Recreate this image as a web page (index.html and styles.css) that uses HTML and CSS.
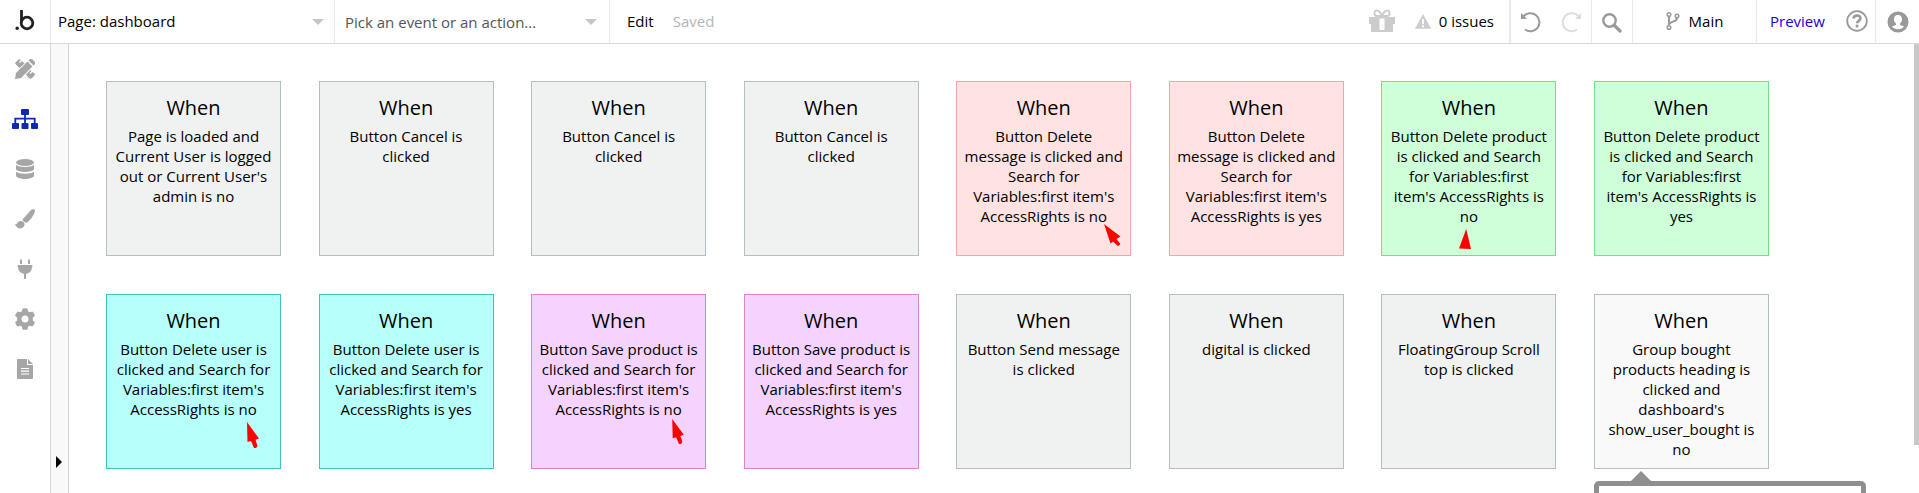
FILE: index.html
```html
<!DOCTYPE html>
<html lang="en">

<head>
    <meta charset="utf-8">
    <title>Workflow editor</title>
    <meta name="viewport" content="width=device-width, initial-scale=1.0">
    <link rel="stylesheet" href="styles.css">
</head>

<body>
    <header class="topbar">
        <a class="logo" href="#" aria-label="Home">
            <svg width="20" height="22" viewBox="0 0 20 22">
                <circle cx="2.2" cy="18.3" r="1.7" fill="#222" />
                <path d="M6.5 0v12" fill="none" stroke="#222" stroke-width="2.8" />
                <circle cx="12" cy="13" r="5.8" fill="none" stroke="#222" stroke-width="2.8" />
            </svg>
        </a>
        <div class="dropdown page-picker">
            <select aria-label="Page">
                <option>Page: dashboard</option>
            </select>
        </div>
        <div class="dropdown event-picker">
            <select aria-label="Event or action">
                <option>Pick an event or an action...</option>
            </select>
        </div>
        <button class="edit">Edit</button>
        <span class="saved">Saved</span>

        <div class="issues">
            <button aria-label="Gift">
                <svg width="26" height="24" viewBox="0 0 26 24">
                    <path d="M0 8h26v7h-2v8H2v-8H0z" fill="#ccc" />
                    <path d="M10.500 9.500h5V21h-5z" fill="#fff" />
                    <path d="M13 7C11 2 9 1 7 1.500S4.500 7 8 7h10c3.500 0 3-5 1-5.500S15 2 13 7" fill="none" stroke="#ccc" stroke-width="2" />
                </svg>
            </button>
            <button class="issue-count">
                <svg width="16" height="15" viewBox="0 0 16 15">
                    <path d="M8 .5 15.700 14.500H.3z" fill="#ccc" stroke="#ccc" stroke-width=".5" stroke-linejoin="round" />
                    <path d="M8 5v5M8 11.200v2" stroke="#fff" stroke-width="2" />
                </svg>
                0 issues
            </button>
        </div>
        <div class="history">
            <button aria-label="Undo">
                <svg width="22" height="22" viewBox="0 0 22 22">
                    <path d="M3.500 5.500A9 9 0 1 1 5 18.500" fill="none" stroke="#999" stroke-width="2" />
                    <path d="M1 2v6h6z" fill="#999" />
                </svg>
            </button>
            <button aria-label="Redo">
                <svg width="22" height="22" viewBox="0 0 22 22">
                    <path d="M18.500 5.500A9 9 0 1 0 17 18.500" fill="none" stroke="#ddd" stroke-width="2" />
                    <path d="M21 2v6h-6z" fill="#ddd" />
                </svg>
            </button>
        </div>
        <button class="search" aria-label="Search">
            <svg width="20" height="20" viewBox="0 0 20 20">
                <circle cx="7.500" cy="7.500" r="6.200" fill="none" stroke="#999" stroke-width="2.400" />
                <path d="M12 12l7 7" stroke="#999" stroke-width="3.200" />
            </svg>
        </button>
        <button class="branch">
            <svg width="14" height="20" viewBox="0 0 14 20" fill="none" stroke="#999">
                <circle cx="3" cy="3.500" r="1.800" stroke-width="1.500" />
                <circle cx="11" cy="5" r="1.800" stroke-width="1.500" />
                <circle cx="3" cy="16.500" r="1.800" stroke-width="1.500" />
                <path d="M3 5.500v9M11 7c0 4-6 3-8 6" stroke-width="2" />
            </svg>
            Main
        </button>
        <div class="preview">
            <a href="#">Preview</a>
            <button aria-label="Help">
                <svg width="22" height="22" viewBox="0 0 22 22" fill="none" stroke="#999">
                    <circle cx="11" cy="11" r="9.800" stroke-width="1.800" />
                    <path d="M7.500 8.500C8 4.500 14.500 4.500 14.500 8.300c0 2.700-3.500 2.500-3.500 5" stroke-width="2.600" />
                    <path d="M9.700 16h2.700" stroke-width="2.600" />
                </svg>
            </button>
        </div>
        <button class="account" aria-label="Account">
            <svg width="22" height="22" viewBox="0 0 22 22">
                <circle cx="11" cy="11" r="10.500" fill="#999" />
                <path d="M11 4c-3 0-4 2-4 4.300 0 2 .8 3.400 2 4.200v1.500l-4 1.600c1.300 1.700 3.500 2.700 6 2.700s4.700-1 6-2.700l-4-1.600v-1.500c1.200-.8 2-2.200 2-4.200C15 6 14 4 11 4z" fill="#fff" />
            </svg>
        </button>
    </header>

    <div class="workspace">
        <nav class="sidebar">
            <a href="#" aria-label="Design">
                <svg width="20" height="20" viewBox="0 0 20 20" fill="currentColor">
                    <path d="M0 20l1-6L12.500 2.500l5 5L6 19z" />
                    <path d="M13.500 1.500l1-1a2 2 0 0 1 3 0l2 2a2 2 0 0 1 0 3l-1 1z" />
                    <path d="M4.500 9 1 5.500Q-.5 4 1 3L3.500.5Q5 0 6 1L4 3l1 1 2-2L9.500 4.500zM11 15.500l4.500-4.500 1 1-2 2 1 1 2-2 2 1.500q1 1 0 2L17 19q-1.500 1.500-3 0z" />
                </svg>
            </a>
            <a class="active" href="#" aria-label="Workflow">
                <svg width="26" height="20" viewBox="0 0 26 20" fill="currentColor">
                    <rect x="9" y="0" width="8" height="6" rx="1" />
                    <rect x="0" y="14" width="7" height="6" rx="1" />
                    <rect x="9.500" y="14" width="7" height="6" rx="1" />
                    <rect x="19" y="14" width="7" height="6" rx="1" />
                    <path d="M13 5v9M3.300 14V9.700h19.400V14" fill="none" stroke="currentColor" stroke-width="1.800" />
                </svg>
            </a>
            <a href="#" aria-label="Data">
                <svg width="18" height="20" viewBox="0 0 18 20" fill="currentColor">
                    <ellipse cx="9" cy="3.500" rx="9" ry="3.500" />
                    <path d="M0 6c3 2.600 15 2.600 18 0v4.300c-2 3.600-16 3.600-18 0zM0 12.700c3 2.600 15 2.600 18 0V17c-2 4-16 4-18 0z" />
                </svg>
            </a>
            <a href="#" aria-label="Styles">
                <svg width="20" height="20" viewBox="0 0 20 20" fill="currentColor">
                    <path d="M7.500 10.500 15.500 1.500C17-.3 20.500-.2 20 2.500c-1 3.500-4 7.500-7.500 11C10.500 13.800 8 13 7.500 10.500z" />
                    <path d="M0 14.800c1.500.8 2 .3 2.500-1C4 11 8.500 11.500 9.500 14.500 10.500 19.500 2 22.500 0 14.800z" />
                </svg>
            </a>
            <a href="#" aria-label="Plugins">
                <svg width="16" height="20" viewBox="0 0 16 20" fill="currentColor">
                    <path d="M3 1q1-1.500 2 0v4H3zM11 1q1-1.500 2 0v4h-2zM1 6h14q1 .8 0 2-.3 5.500-6 7v5H7v-5Q1.300 13.500 1 8 0 7 1 6z" />
                </svg>
            </a>
            <a href="#" aria-label="Settings">
                <svg width="20" height="22" viewBox="0 0 20 22" fill="currentColor">
                    <path fill-rule="evenodd" d="M7.500.6Q10-.2 12.500.6L13 3.300l1.800 1 2.600-.9q1.800 1.900 2.500 4.300L17.800 9.500v3l2.100 1.800q-.7 2.400-2.500 4.300l-2.600-.9-1.800 1-.5 2.700q-2.500.8-5 0L7 18.700l-1.800-1-2.600.9Q.8 16.700.1 14.300l2.100-1.800v-3L.1 7.700Q.8 5.300 2.600 3.400l2.600.9 1.800-1zM10 7.500a3.500 3.500 0 1 0 0 7 3.500 3.500 0 1 0 0-7z" />
                </svg>
            </a>
            <a href="#" aria-label="Logs">
                <svg width="16" height="20" viewBox="0 0 16 20">
                    <path d="M1 0h9v6h6v13q0 1-1 1H1q-1 0-1-1V1q0-1 1-1zM11 0l5 5h-5z" fill="currentColor" />
                    <path d="M4 9.500h8M4 12.200h8M4 15h8" stroke="#fff" stroke-width="1.200" />
                </svg>
            </a>
        </nav>
        <div class="rail">
            <button aria-label="Expand panel">
                <svg width="6" height="12" viewBox="0 0 6 12">
                    <path d="M0 0l6 6-6 6z" />
                </svg>
            </button>
        </div>

        <main class="canvas">
            <div class="events">
                <article class="event">
                    <h2>When</h2>
                    <p>Page is loaded and Current User is logged out or Current User's admin is no</p>
                </article>
                <article class="event">
                    <h2>When</h2>
                    <p>Button Cancel is clicked</p>
                </article>
                <article class="event">
                    <h2>When</h2>
                    <p>Button Cancel is clicked</p>
                </article>
                <article class="event">
                    <h2>When</h2>
                    <p>Button Cancel is clicked</p>
                </article>
                <article class="event red">
                    <h2>When</h2>
                    <p>Button Delete message is clicked and Search for Variables:first item's AccessRights is no</p>
                    <svg class="pointer pointer-message" width="17" height="22" viewBox="0 0 17 22">
                        <path d="M0 0l16.500 12.600-4 2.400 3.500 4.500q.5 2-2.500 2.200L9 17.500l-2.500 2z" />
                    </svg>
                </article>
                <article class="event red">
                    <h2>When</h2>
                    <p>Button Delete message is clicked and Search for Variables:first item's AccessRights is yes</p>
                </article>
                <article class="event green">
                    <h2>When</h2>
                    <p>Button Delete product is clicked and Search for Variables:first item's AccessRights is no</p>
                    <svg class="pointer pointer-product" width="12" height="20" viewBox="0 0 12 20">
                        <path d="M7.200 0 12 20 0 19.500z" />
                    </svg>
                </article>
                <article class="event green">
                    <h2>When</h2>
                    <p>Button Delete product is clicked and Search for Variables:first item's AccessRights is yes</p>
                </article>
                <article class="event cyan">
                    <h2>When</h2>
                    <p>Button Delete user is clicked and Search for Variables:first item's AccessRights is no</p>
                    <svg class="pointer pointer-user" width="12" height="26" viewBox="0 0 12 26">
                        <path d="M0 0l12 16.500-3.500 1.300L10.500 24q-.5 2.500-3.500 2L4 19l-3.500 1z" />
                    </svg>
                </article>
                <article class="event cyan">
                    <h2>When</h2>
                    <p>Button Delete user is clicked and Search for Variables:first item's AccessRights is yes</p>
                </article>
                <article class="event purple">
                    <h2>When</h2>
                    <p>Button Save product is clicked and Search for Variables:first item's AccessRights is no</p>
                    <svg class="pointer pointer-save" width="12" height="25" viewBox="0 0 12 26">
                        <path d="M0 0l12 16.500-3.500 1.300L10.500 24q-.5 2.500-3.500 2L4 19l-3.500 1z" />
                    </svg>
                </article>
                <article class="event purple">
                    <h2>When</h2>
                    <p>Button Save product is clicked and Search for Variables:first item's AccessRights is yes</p>
                </article>
                <article class="event">
                    <h2>When</h2>
                    <p>Button Send message is clicked</p>
                </article>
                <article class="event">
                    <h2>When</h2>
                    <p>digital is clicked</p>
                </article>
                <article class="event">
                    <h2>When</h2>
                    <p>FloatingGroup Scroll top is clicked</p>
                </article>
                <article class="event selected">
                    <h2>When</h2>
                    <p>Group bought products heading is clicked and dashboard's show_user_bought is no</p>
                    <div class="popup"></div>
                </article>
            </div>
            <div class="scroll-thumb"></div>
        </main>
    </div>
</body>

</html>
```

FILE: styles.css
```css
* {
    box-sizing: border-box;
}

body {
    margin: 0;
    height: 100vh;
    display: flex;
    flex-direction: column;
    overflow: hidden;
    background-color: #fff;
    color: #000;
    font-family: "Open Sans", sans-serif;
    font-size: 15px;
    font-weight: 400;
    line-height: 20px;
}

button,
select {
    font: inherit;
    color: inherit;
    background: none;
    border: none;
    padding: 0;
    cursor: pointer;
}

svg {
    display: block;
    flex: none;
}

/* top bar */

.topbar {
    flex: none;
    display: flex;
    height: 44px;
    border-bottom: 1px solid #d5dadb;
    align-items: stretch;
}

.logo {
    width: 51px;
    padding-bottom: 1px;
    display: flex;
    align-items: center;
    justify-content: center;
    border-right: 1px solid #e6eced;
}

.dropdown {
    position: relative;
    display: flex;
    border-right: 1px solid #e6eced;
}

.dropdown select {
    appearance: none;
    width: 100%;
    padding: 0 32px 1px 7px;
}

.dropdown::after {
    content: "";
    position: absolute;
    right: 10px;
    top: 19px;
    border: 6px solid transparent;
    border-top-color: #bcc8cd;
    border-bottom: none;
    pointer-events: none;
}

.page-picker {
    width: 284px;
}

.event-picker {
    width: 275px;
    color: #555;
}

.event-picker select {
    padding: 0 32px 0 10px;
}

.event-picker::after {
    right: 12px;
}

.edit {
    padding: 0 19px 1px 17px;
}

.saved {
    align-self: center;
    padding-bottom: 1px;
    color: #b5b5b5;
}

.issues {
    margin-left: auto;
    display: flex;
    align-items: center;
    gap: 20px;
    padding: 0 15px 1px 0;
    border-right: 2px solid #e6eced;
}

.issue-count {
    display: flex;
    align-items: center;
    gap: 8px;
}

.history {
    width: 81px;
    display: flex;
    align-items: center;
    justify-content: space-between;
    padding: 0 9px;
    border-right: 1px solid #e6eced;
}

.search,
.branch,
.account {
    display: flex;
    align-items: center;
    justify-content: center;
}

.search {
    width: 41px;
    padding-top: 3px;
    border-right: 1px solid #e6eced;
}

.branch {
    width: 124px;
    gap: 9px;
    padding-bottom: 1px;
    border-right: 1px solid #e6eced;
}

.preview {
    width: 119px;
    display: flex;
    align-items: center;
    justify-content: space-between;
    padding: 0 7px 1px 13px;
    border-right: 1px solid #e6eced;
}

.preview a {
    color: #1a00d8;
    text-decoration: none;
}

.account {
    width: 43px;
}

/* workspace */

.workspace {
    flex: 1;
    display: flex;
    min-height: 0;
}

.sidebar {
    width: 51px;
    border-right: 1px solid #d5d5d5;
}

.sidebar a {
    height: 50px;
    display: flex;
    align-items: center;
    justify-content: center;
    color: #a6a6a6;
}

.sidebar .active {
    color: #0d29b0;
}

.rail {
    width: 18px;
    display: flex;
    align-items: flex-end;
    padding: 0 0 25px 5px;
    background-color: #f9f9f9;
    border-right: 1px solid #d5d5d5;
}

.canvas {
    position: relative;
    flex: 1;
    overflow: hidden;
}

.events {
    display: grid;
    grid-template-columns: repeat(8, 175px);
    justify-content: space-between;
    row-gap: 38px;
    padding: 37px 150px 0 37px;
}

.event {
    position: relative;
    height: 175px;
    padding: 12px 6px;
    text-align: center;
    background-color: #f0f2f2;
    border: 1px solid #b3bfc3;
}

.event h2 {
    margin: 0 0 4px;
    font-size: 20px;
    font-weight: 400;
    line-height: 28px;
}

.event p {
    margin: 0;
}

.red {
    background-color: #ffe2e2;
    border-color: #f0a8a8;
}

.green {
    background-color: #ceffd8;
    border-color: #7bdb88;
}

.cyan {
    background-color: #b7fffb;
    border-color: #3bc3bd;
}

.purple {
    background-color: #f5d3ff;
    border-color: #db83d2;
}

.selected {
    background-color: #f9f9f9;
}

/* hand-placed marks over the cards */

.pointer {
    position: absolute;
    fill: #f00;
}

.pointer-message {
    left: 147px;
    top: 142px;
}

.pointer-product {
    left: 77px;
    top: 147px;
}

.pointer-user {
    left: 140px;
    top: 127px;
}

.pointer-save {
    left: 140px;
    top: 124px;
}

/* popup under the selected event, runs off the bottom edge */

.popup {
    position: absolute;
    left: -1px;
    top: 186px;
    width: 272px;
    height: 120px;
    background-color: #fff;
    border: 5px solid #8f8f8f;
    border-radius: 5px;
}

.popup::before {
    content: "";
    position: absolute;
    left: 32px;
    top: -15px;
    border: 10px solid transparent;
    border-top: none;
    border-bottom-color: #8f8f8f;
}

.scroll-thumb {
    position: absolute;
    top: 0;
    right: 0;
    width: 5px;
    height: 401px;
    background-color: #c8c8c8;
}
```
